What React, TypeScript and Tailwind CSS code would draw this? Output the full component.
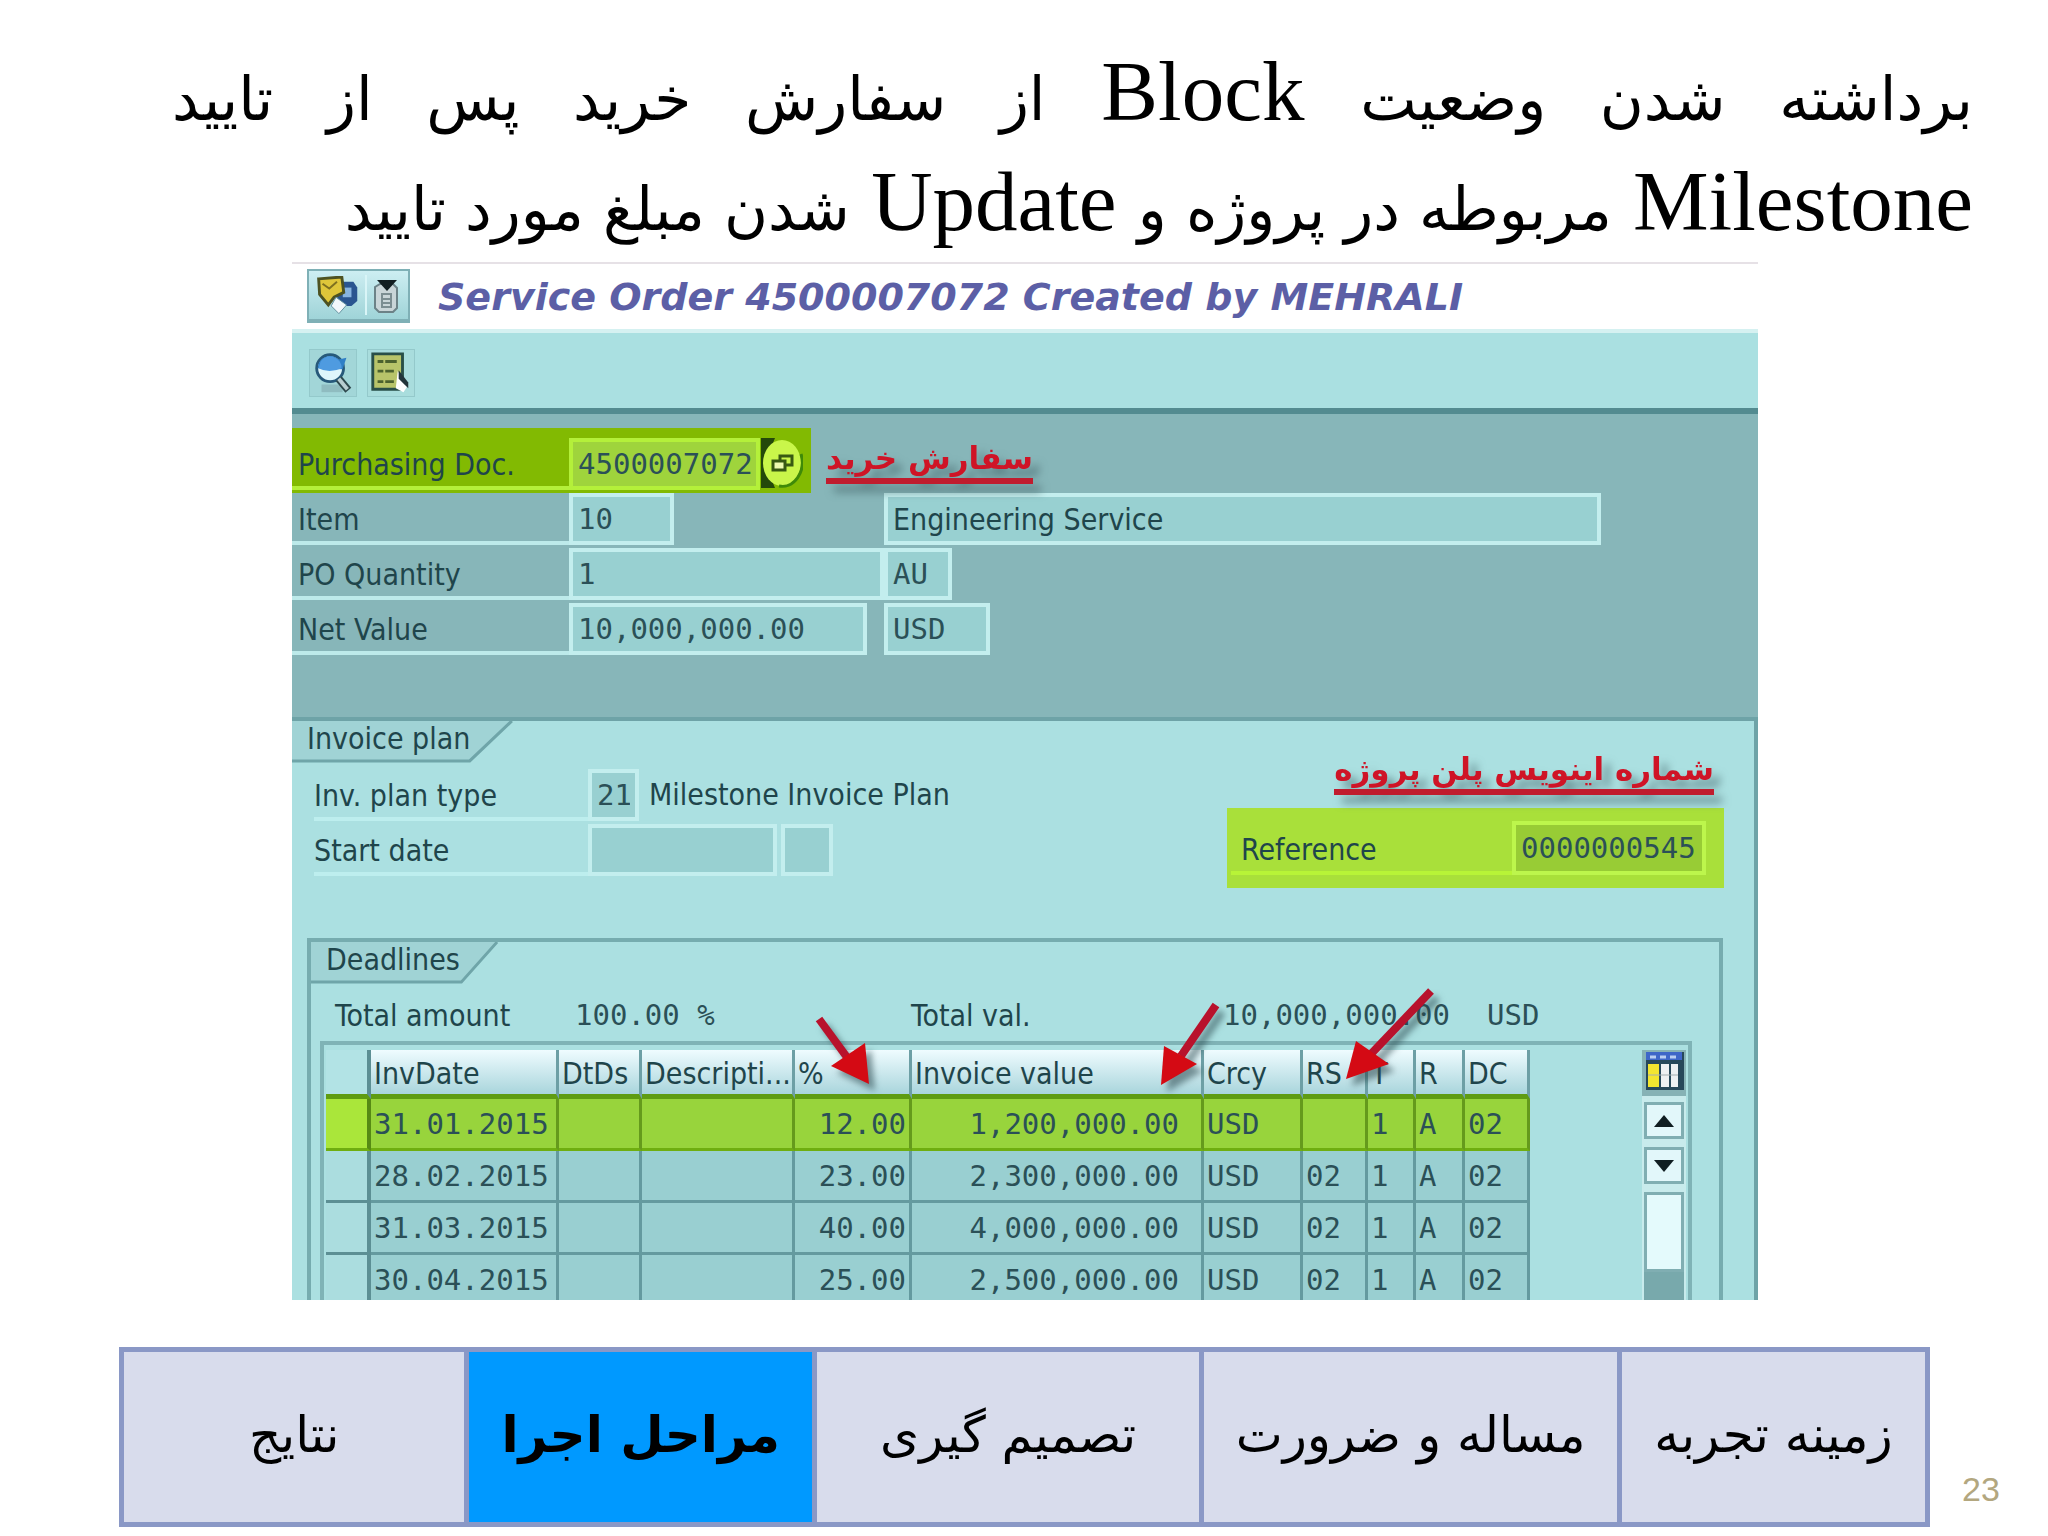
import type { ReactNode } from "react";

const label = "font-['DejaVu_Sans_Condensed','DejaVu_Sans',sans-serif] text-[30px] text-[#1f454b]";
const mono = "font-['DejaVu_Sans_Mono',monospace] text-[29px] text-[#2b5057]";
const field = "h-[52px] border-4 border-[#c3eeee] bg-[#98d0d1] px-[5px] outline-none";

const deadlines = [
  { date: "31.01.2015", percent: "12.00", value: "1,200,000.00", rs: "" },
  { date: "28.02.2015", percent: "23.00", value: "2,300,000.00", rs: "02" },
  { date: "31.03.2015", percent: "40.00", value: "4,000,000.00", rs: "02" },
  { date: "30.04.2015", percent: "25.00", value: "2,500,000.00", rs: "02" },
];

const headers = ["InvDate", "DtDs", "Descripti...", "%", "Invoice value", "Crcy", "RS", "T", "R", "DC"];

const steps = [
  { title: "زمینه تجربه", size: "w-[17.1%]" },
  { title: "مساله و ضرورت", size: "w-[23.2%]" },
  { title: "تصمیم گیری", size: "w-[21.5%]" },
  { title: "مراحل اجرا", size: "w-[19.3%]", active: true },
  { title: "نتایج", size: "w-[18.9%]" },
];

function Fa({ children }: { children: ReactNode }) {
  return <span className="font-['DejaVu_Sans',sans-serif] text-[60px] leading-none">{children}</span>;
}

function Tab({ children, width }: { children: ReactNode; width: string }) {
  return (
    <div className={`relative h-[42px] ${width}`}>
      <svg className="absolute inset-0 h-full w-full" viewBox="0 0 200 42" preserveAspectRatio="none">
        <path d="M0 0H198L160 40H0Z" fill="#a0d3d5" />
        <path d="M198 0L160 40H0" fill="none" stroke="#6fa5a9" strokeWidth="3" />
      </svg>
      <h2 className={`relative pl-[15px] leading-9 ${label}`}>{children}</h2>
    </div>
  );
}

function Note({ children }: { children: ReactNode }) {
  return (
    <p
      dir="rtl"
      className="border-b-[6px] border-[#c01c2e] font-['DejaVu_Sans',sans-serif] text-[31px] leading-10 font-bold whitespace-nowrap text-[#cf1426] drop-shadow-[8px_8px_4px_rgba(60,90,95,0.6)]"
    >
      {children}
    </p>
  );
}

function Toolbar() {
  return (
    <div className="flex h-[81px] items-center gap-2.5 border-b-[6px] border-[#538b90] bg-[#aae0e1] pt-1 pl-[17px]">
      <button aria-label="Display" className="h-12 w-12 border border-[#94c9cb] bg-[#a2d6d8]">
        <svg viewBox="0 0 48 48">
          <path d="M12 36H34V44H12Z" fill="#8fbcc0" />
          <circle cx="21" cy="19" r="14" fill="#dff6fb" stroke="#27597a" strokeWidth="3" />
          <path d="M8 19a13 13 0 0 1 22-9l8-2-4 12z" fill="#2f7fc6" />
          <path d="M9 19q11 6 24 0a12 12 0 0 0-22-7z" fill="#4f9be0" />
          <path d="M30 30L40 42" stroke="#2d474c" strokeWidth="8" />
          <path d="M30 30L39 41" stroke="#b8cdd0" strokeWidth="4" />
        </svg>
      </button>
      <button aria-label="Item list" className="h-12 w-12 border border-[#94c9cb] bg-[#a9dddd]">
        <svg viewBox="0 0 48 48">
          <path d="M5 4H36V41H5Z" fill="#b8c46a" stroke="#294f48" strokeWidth="3" />
          <path d="M10 12H31M10 22H27M10 33H27" stroke="#4c622e" strokeWidth="3" strokeDasharray="6 2 12" />
          <path d="M31 22L41 38L37 44L29 40Z" fill="#fff" />
          <path d="M32 21V30L42 40V34Z" fill="#22343a" />
        </svg>
      </button>
    </div>
  );
}

function OrderForm() {
  const caption = `w-[277px] shrink-0 border-b-4 border-[#bdeaea] pt-1.5 pl-[6px] leading-[42px] ${label}`;
  return (
    <div className="flex flex-col gap-[3px] bg-[#87b6b9] pt-[14px] pb-[62px]">
      <div className="-mb-[3px] flex gap-[15px]">
        <div className="flex w-[519px] bg-[#82ba02] pt-2.5 pb-[3px]">
          <label htmlFor="doc" className={`w-[277px] border-b-4 border-[#b4f03a] pt-1.5 pl-[6px] leading-[42px] ${label}`}>
            Purchasing Doc.
          </label>
          <input
            id="doc"
            readOnly
            value="4500007072"
            className={`h-[52px] w-[191px] border-4 border-[#b4f03a] bg-[#9fd43c] px-[5px] outline-none ${mono}`}
          />
          <button aria-label="Choose order" className="ml-px h-[50px] w-[42px]">
            <svg viewBox="0 0 42 50">
              <path d="M0 0H14L4 25L14 50H0Z" fill="#24490a" />
              <ellipse cx="21" cy="25" rx="19" ry="23" fill="#c9f64a" />
              <path d="M40 16a20 24 0 0 1-22 32" fill="none" stroke="#3f8a08" strokeWidth="3" />
              <path d="M19 18H31V27H19Z" fill="none" stroke="#385a12" strokeWidth="3" />
              <path d="M12 23H24V32H12Z" fill="#eefbb0" stroke="#385a12" strokeWidth="3" />
            </svg>
          </button>
        </div>
        <div className="pt-2.5">
          <Note>سفارش خرید</Note>
        </div>
      </div>
      <div className="flex">
        <label htmlFor="item" className={caption}>Item</label>
        <input id="item" readOnly value="10" className={`w-[105px] ${field} ${mono}`} />
        <input aria-label="Item text" readOnly value="Engineering Service" className={`ml-[210px] w-[717px] ${field} ${label}`} />
      </div>
      <div className="flex">
        <label htmlFor="quantity" className={caption}>PO Quantity</label>
        <input id="quantity" readOnly value="1" className={`w-[315px] ${field} ${mono}`} />
        <input aria-label="Unit" readOnly value="AU" className={`w-[68px] ${field} ${mono}`} />
      </div>
      <div className="flex">
        <label htmlFor="net" className={caption}>Net Value</label>
        <input id="net" readOnly value="10,000,000.00" className={`w-[298px] ${field} ${mono}`} />
        <input aria-label="Currency" readOnly value="USD" className={`ml-[17px] w-[106px] ${field} ${mono}`} />
      </div>
    </div>
  );
}

function InvoicePlan() {
  const caption = `w-[274px] border-b-4 border-[#bdeeee] pt-1.5 leading-[42px] ${label}`;
  return (
    <div className="flex justify-between pr-[30px]">
      <div>
        <Tab width="w-[222px]">Invoice plan</Tab>
        <div className="flex flex-col gap-[3px] pt-[6px] pl-[22px]">
          <div className="flex">
            <label htmlFor="type" className={caption}>Inv. plan type</label>
            <input id="type" readOnly value="21" className={`w-[51px] ${field} ${mono}`} />
            <span className={`pl-2.5 leading-[52px] ${label}`}>Milestone Invoice Plan</span>
          </div>
          <div className="flex">
            <label htmlFor="start" className={caption}>Start date</label>
            <input id="start" readOnly value="" className={`w-[189px] ${field}`} />
            <input aria-label="Date rule" readOnly value="" className={`ml-1 w-[52px] ${field}`} />
          </div>
        </div>
      </div>
      <div className="flex flex-col items-end pt-[28px]">
        <div className="mr-2.5">
          <Note>شماره اینویس پلن پروژه</Note>
        </div>
        <div className="mt-[13px] flex w-[497px] justify-between bg-[#a9e03a] py-[13px] pr-[18px] pl-[4px]">
          <label htmlFor="reference" className={`grow border-b-4 border-[#b8f437] pt-2 pl-2.5 leading-[42px] ${label}`}>
            Reference
          </label>
          <input
            id="reference"
            readOnly
            value="0000000545"
            className={`h-[54px] w-[194px] border-4 border-[#bdf64c] bg-[#98cc35] px-[5px] outline-none ${mono}`}
          />
        </div>
      </div>
    </div>
  );
}

function DeadlineTable() {
  const line = "border-r-[3px] border-b-[3px] pt-[3px]";
  const cell = `${line} px-[3px]`;
  return (
    <table className="w-[1204px] table-fixed border-separate border-spacing-0">
      <colgroup>
        <col className="w-[45px]" />
        <col className="w-[188px]" />
        <col className="w-[83px]" />
        <col className="w-[153px]" />
        <col className="w-[117px]" />
        <col className="w-[292px]" />
        <col className="w-[99px]" />
        <col className="w-[65px]" />
        <col className="w-[48px]" />
        <col className="w-[49px]" />
        <col className="w-[65px]" />
      </colgroup>
      <thead>
        <tr className="h-[49px]">
          <th className="border-r-4 border-b-[5px] border-r-[#5c8f94] border-b-[#5f9c12] bg-[#b2e3e5]" />
          {headers.map((name) => (
            <th
              key={name}
              className={`overflow-hidden border-r-[3px] border-b-[5px] border-r-[#6d9fa5] border-b-[#5f9c12] bg-linear-to-b from-[#effcff] to-[#a9d5dc] pt-1 pl-[3px] text-left leading-10 font-normal whitespace-nowrap ${label}`}
            >
              {name}
            </th>
          ))}
        </tr>
      </thead>
      <tbody>
        {deadlines.map((row, i) => {
          const tone =
            i === 0 ? "border-r-[#659a1c] border-b-[#6fae10] bg-[#98d43c]" : "border-[#649a9f] bg-[#99cfd1]";
          return (
            <tr key={row.date} className={`h-[52px] ${mono}`}>
              <td
                className={`border-r-4 border-b-[3px] ${
                  i === 0 ? "border-r-[#568a14] border-b-[#6fae10] bg-[#aae63a]" : "border-[#5c8f94] bg-[#abdddf]"
                }`}
              />
              <td className={`${cell} ${tone}`}>{row.date}</td>
              <td className={`${cell} ${tone}`} />
              <td className={`${cell} ${tone}`} />
              <td className={`${cell} text-right ${tone}`}>{row.percent}</td>
              <td className={`${line} pr-[22px] text-right ${tone}`}>{row.value}</td>
              <td className={`${cell} ${tone}`}>USD</td>
              <td className={`${cell} ${tone}`}>{row.rs}</td>
              <td className={`${cell} ${tone}`}>1</td>
              <td className={`${cell} ${tone}`}>A</td>
              <td className={`${cell} ${tone}`}>02</td>
            </tr>
          );
        })}
      </tbody>
    </table>
  );
}

function ScrollBar() {
  const button = "flex h-[37px] w-10 items-center justify-center border-[3px] border-[#80aeb2] bg-[#e2f7fa]";
  return (
    <div className="flex w-11 flex-col items-center gap-2 bg-[#c8ebec]">
      <button aria-label="Table settings" className="-mb-0.5 h-[46px] w-11 bg-[#86b2b5]">
        <svg viewBox="0 0 44 46">
          <path d="M4 2H42V40H4Z" fill="#27485a" />
          <path d="M4 2H40V10H4Z" fill="#3e66c8" />
          <path d="M8 7H38" stroke="#b9cdf2" strokeWidth="3" strokeDasharray="6 4" />
          <path d="M6 14H17V37H6Z" fill="#f2e530" />
          <path d="M19 14H27V37H19ZM29 14H36V37H29Z" fill="#eef0f2" />
          <path d="M6 25H36" stroke="#a5aeb0" strokeWidth="1" />
        </svg>
      </button>
      <button aria-label="Scroll up" className={button}>
        <svg className="w-5" viewBox="0 0 20 12"><path d="M10 0L20 12H0Z" fill="#101e22" /></svg>
      </button>
      <button aria-label="Scroll down" className={button}>
        <svg className="w-5" viewBox="0 0 20 12"><path d="M0 0H20L10 12Z" fill="#101e22" /></svg>
      </button>
      <div className="w-10 grow bg-[#78a9ac]">
        <div className="h-20 border-[3px] border-[#80aeb2] bg-[#e4fafc]" />
      </div>
    </div>
  );
}

// Red pointers over the %, Invoice value and RS columns
function Arrows() {
  return (
    <svg className="absolute -top-[62px] left-[487px] h-[110px] w-[640px] drop-shadow-[6px_7px_3px_rgba(40,70,75,0.55)]" viewBox="810 983 640 110">
      <g stroke="#b8122c" strokeWidth="8">
        <path d="M818 1019L848 1060" />
        <path d="M1215 1005L1180 1056" />
        <path d="M1430 991L1370 1054" />
      </g>
      <g fill="#d40a14">
        <path d="M868 1084L864 1043L830 1066Z" />
        <path d="M1160 1085L1163 1046L1196 1064Z" />
        <path d="M1345 1079L1355 1041L1388 1064Z" />
      </g>
    </svg>
  );
}

function Deadlines() {
  return (
    <div className="mt-[50px] mr-[31px] ml-[15px] border-x-4 border-t-4 border-[#76acaf]">
      <Tab width="w-[188px]">Deadlines</Tab>
      <div className={`flex h-[57px] items-center pt-1.5 pl-[24px] whitespace-nowrap ${label}`}>
        <span className="w-[240px]">Total amount</span>
        <span className={`w-[336px] ${mono}`}>100.00 %</span>
        <span className="w-[312px]">Total val.</span>
        <span className={`w-[264px] ${mono}`}>10,000,000.00</span>
        <span className={mono}>USD</span>
      </div>
      <div className="relative mr-[27px] ml-[9px] flex justify-between border-x-4 border-t-4 border-[#7fb3b6] pt-[5px] pr-[2px] pl-[2px]">
        <DeadlineTable />
        <ScrollBar />
        <Arrows />
      </div>
    </div>
  );
}

export default function App() {
  return (
    <main className="min-h-screen overflow-hidden bg-white">
      <h1
        dir="rtl"
        className="pt-9 pr-[75px] pl-[172px] font-['Liberation_Serif',serif] text-[85px] leading-[110px] whitespace-nowrap text-black"
      >
        <span className="block [text-align-last:justify]">
          <Fa>برداشته شدن وضعیت</Fa> Block <Fa>از سفارش خرید پس از تایید</Fa>
        </span>
        <span className="block">
          Milestone <Fa>مربوطه در پروژه و</Fa> Update <Fa>شدن مبلغ مورد تایید</Fa>
        </span>
      </h1>

      {/* Service order window */}
      <section className="mt-[6px] mr-[290px] ml-[292px] overflow-hidden">
        <header className="flex h-[71px] gap-7 border-t-2 border-b-4 border-t-[#e6e1e6] border-b-[#d5f1f1] pt-[5px] pl-[15px]">
          <div className="flex h-[54px] w-[103px] items-center border-2 border-b-4 border-[#7fb0b6] bg-linear-to-b from-[#cdeef2] to-[#9fd4d8]">
            <button aria-label="Services for object" className="h-10 w-[58px] border-r-2 border-[#d9f5f7]">
              <svg viewBox="0 0 58 40">
                <path d="M28 6H46L50 12V26L44 31H30Z" fill="#2a5590" />
                <path d="M35 12H44V22H35Z" fill="#87b4e0" />
                <path d="M10 3L34 1L36 17L26 22L20 30L11 19Z" fill="#dfc63a" stroke="#4d5222" strokeWidth="3" />
                <path d="M14 8L21 13L29 6" fill="none" stroke="#7e7020" strokeWidth="2" />
                <path d="M28 22L39 30L31 39L23 31Z" fill="#f1f8fb" stroke="#5f8f9d" strokeWidth="1" />
              </svg>
            </button>
            <button aria-label="More" className="h-10 w-[40px]">
              <svg viewBox="0 0 40 40">
                <path d="M8 12L13 9H26L30 13V33L26 37H12L8 33Z" fill="#c9d5d8" stroke="#6c8287" strokeWidth="2" />
                <path d="M10 5H30L20 16Z" fill="#111d20" />
                <path d="M15 19H24V32H15ZM15 24H24M15 28H24" fill="none" stroke="#7b8d91" strokeWidth="2" />
              </svg>
            </button>
          </div>
          <p className="font-['DejaVu_Sans',sans-serif] text-[38px] leading-[56px] font-bold whitespace-nowrap text-[#5c5fa6] italic">
            Service Order 4500007072 Created by MEHRALI
          </p>
        </header>
        <Toolbar />
        <OrderForm />
        <div className="h-[583px] overflow-hidden border-t-4 border-r-4 border-[#6ea3a7] bg-[#abe0e1]">
          <InvoicePlan />
          <Deadlines />
        </div>
      </section>

      {/* Chapter bar */}
      <footer className="mt-[47px] flex">
        <nav dir="rtl" className="mr-[118px] ml-[119px] flex grow border-[5px] border-[#8a98c6]">
          {steps.map((step) => (
            <a
              key={step.title}
              href="#"
              className={`flex h-[170px] items-center justify-center border-l-[5px] border-[#8a98c6] pb-1 font-['DejaVu_Sans',sans-serif] text-[50px] whitespace-nowrap text-black last:border-l-0 ${step.size} ${
                step.active ? "bg-[#0099ff] font-bold" : "bg-[#d8dcec]"
              }`}
            >
              {step.title}
            </a>
          ))}
        </nav>
        <span className="-ml-[86px] w-[86px] self-end pb-[12px] font-['Liberation_Sans',sans-serif] text-[34px] text-[#b3a77f]">
          23
        </span>
      </footer>
    </main>
  );
}
